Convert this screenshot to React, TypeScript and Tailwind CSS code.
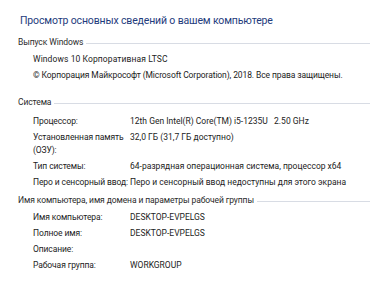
const FONT = "font-['Roboto','Noto_Sans',sans-serif]"
const BODY = 'text-[8.5px] leading-[13px] tracking-[-0.1px]'

function Header({ children }: { children: React.ReactNode }) {
  return (
    <div className="flex items-center gap-[3px] pl-[18px] h-[13px]">
      <span className={`${BODY} text-[#2b2b2b] whitespace-nowrap`}>{children}</span>
      <div className="h-px flex-1 bg-[#d8dce4] mt-[1px]" />
    </div>
  )
}

function Row({ label, value }: { label: React.ReactNode; value?: string }) {
  return (
    <div className={`grid grid-cols-[97px_1fr] ${BODY} text-[#1c1c1c]`}>
      <span className="whitespace-nowrap">{label}</span>
      <span className="whitespace-pre tracking-[0px]">{value}</span>
    </div>
  )
}

export default function App() {
  return (
    <div className={`w-[370px] h-[281px] bg-white overflow-hidden ${FONT}`}>
      <h1 className="pl-[20px] pt-[13px] text-[10.5px] leading-[16px] tracking-[-0.15px] text-[#1e3b7c] font-normal whitespace-nowrap">
        Просмотр основных сведений о вашем компьютере
      </h1>

      {/* Windows edition */}
      <section className="mt-[7px]">
        <Header>Выпуск Windows</Header>
        <div className={`flex flex-col gap-[3px] pl-[33px] pt-[4px] ${BODY} text-[#1c1c1c]`}>
          <span className="tracking-[0.1px]">Windows 10 Корпоративная LTSC</span>
          <span className="whitespace-nowrap">© Корпорация Майкрософт (Microsoft Corporation), 2018. Все права защищены.</span>
        </div>
      </section>

      {/* System */}
      <section className="mt-[14px]">
        <Header>Система</Header>
        <div className="flex flex-col gap-[3px] pl-[33px] pt-[6px]">
          <Row label="Процессор:" value="12th Gen Intel(R) Core(TM) i5-1235U   2.50 GHz" />
          <Row label={<>Установленная память<br />(ОЗУ):</>} value="32,0 ГБ (31,7 ГБ доступно)" />
          <Row label="Тип системы:" value="64-разрядная операционная система, процессор x64" />
          <Row label="Перо и сенсорный ввод:" value="Перо и сенсорный ввод недоступны для этого экрана" />
        </div>
      </section>

      {/* Computer name */}
      <section className="mt-[5px]">
        <Header>Имя компьютера, имя домена и параметры рабочей группы</Header>
        <div className="flex flex-col gap-[3px] pl-[33px] pt-[4px]">
          <Row label="Имя компьютера:" value="DESKTOP-EVPELGS" />
          <Row label="Полное имя:" value="DESKTOP-EVPELGS" />
          <Row label="Описание:" />
          <Row label="Рабочая группа:" value="WORKGROUP" />
        </div>
      </section>
    </div>
  )
}
